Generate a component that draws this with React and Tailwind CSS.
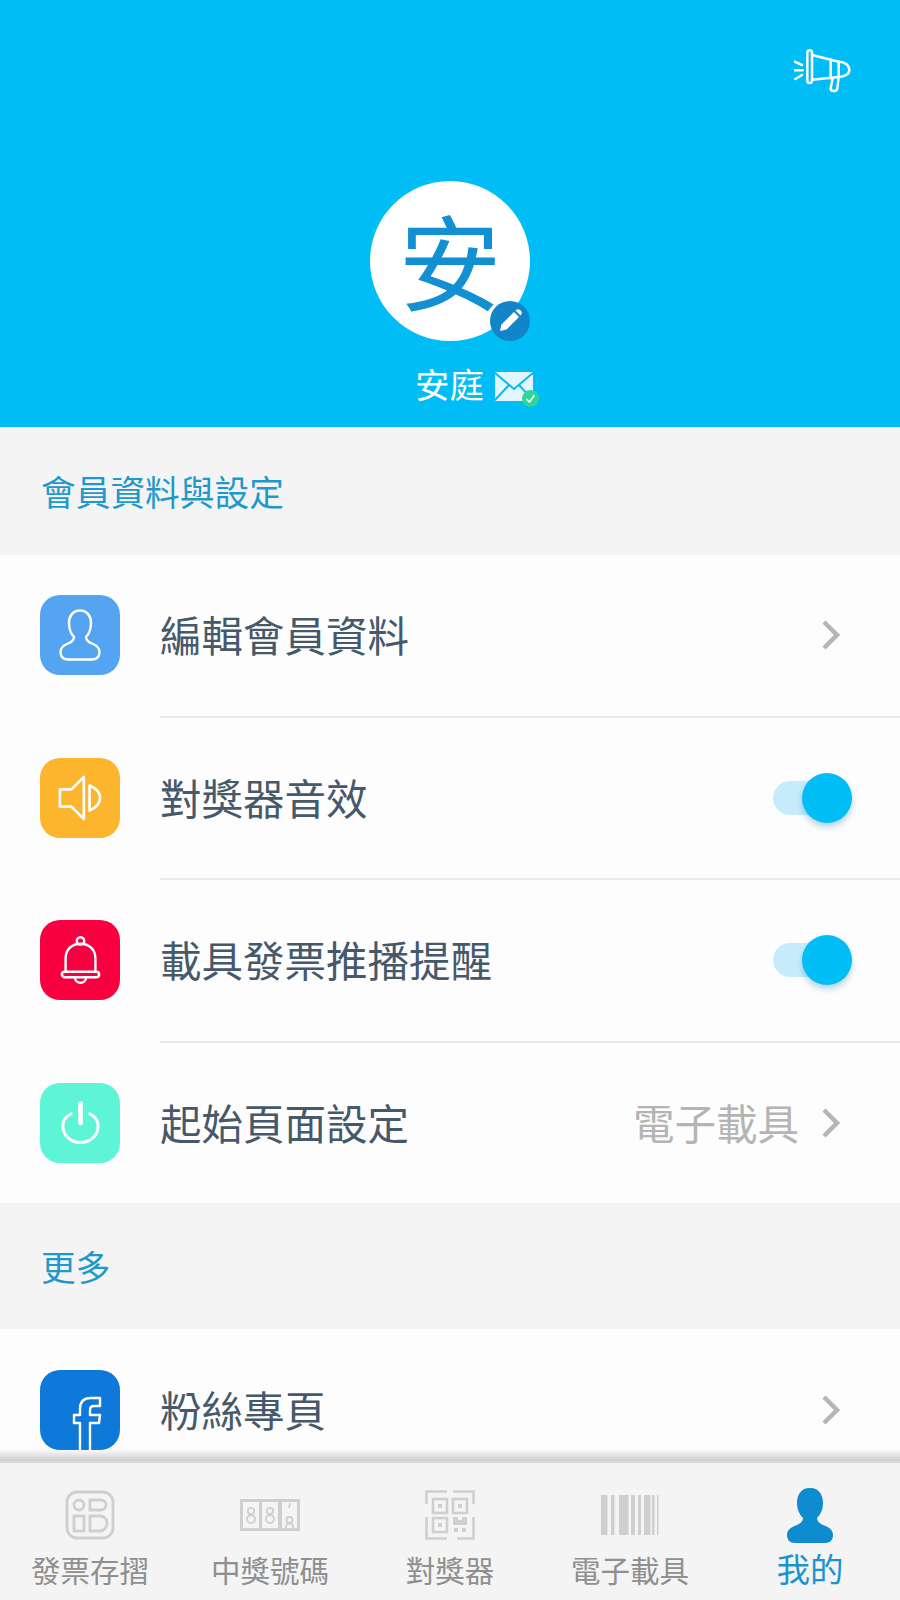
import React from 'react';

const cjk = { fontFamily: '"Noto Sans CJK TC", "Noto Sans", sans-serif' };

const Chevron = () => (
    <svg width="18" height="30" viewBox="0 0 18 30" fill="none" stroke="#b6b6b6" strokeWidth="4.5">
        <path d="M2 2 L15 15 L2 28" />
    </svg>
);

const Toggle = () => (
    <div className="relative w-[79px] h-[50px] flex items-center">
        <div className="w-[62px] h-[34px] rounded-full bg-[#c6ecfb]"></div>
        <div className="absolute right-0 top-0 w-[50px] h-[50px] rounded-full bg-[#00bdf6] shadow-[0_4px_6px_rgba(0,120,170,0.3)]"></div>
    </div>
);

const UserIcon = () => (
    <svg width="42" height="52" viewBox="0 0 42 52" fill="none" stroke="#fff" strokeWidth="2.4">
        <path d="M21 1.5 C14 1.5 10 7 10 14 C10 20 12 25 15 28 C15 31 13 33 9 34.5 C5 36 1.5 38 1.5 43 C1.5 48 5 50.5 10 50.5 L32 50.5 C37 50.5 40.5 48 40.5 43 C40.5 38 37 36 33 34.5 C29 33 27 31 27 28 C30 25 32 20 32 14 C32 7 28 1.5 21 1.5 Z" />
    </svg>
);

const SpeakerIcon = () => (
    <svg width="44" height="46" viewBox="0 0 46 48" fill="none" stroke="#fff" strokeWidth="2.8" strokeLinejoin="round">
        <path d="M2 15 L14 15 L27 2 L27 46 L14 33 L2 33 Z" />
        <path d="M33 11 C40 14 44 19 44 24 C44 29 40 34 33 37 Z" />
    </svg>
);

const BellIcon = () => (
    <svg width="41" height="49" viewBox="0 0 44 52" fill="none" stroke="#fff" strokeWidth="2.6">
        <circle cx="22" cy="5" r="4" />
        <path d="M6 38 L6 24 C6 14 13 8 22 8 C31 8 38 14 38 24 L38 38" />
        <rect x="2" y="38" width="40" height="6" rx="3" />
        <path d="M16 44 C16 48 19 50 22 50 C25 50 28 48 28 44" />
    </svg>
);

const PowerIcon = () => (
    <svg width="39" height="44" viewBox="0 0 42 46" fill="none" stroke="#fff" strokeWidth="3.2" strokeLinecap="round">
        <path d="M11 13 C5 16 2 21 2 26 C2 36 10 44 21 44 C32 44 40 36 40 26 C40 21 37 16 31 13" />
        <path d="M21 2 L21 23" strokeWidth="5" />
    </svg>
);

const FacebookIcon = () => (
    <svg width="30" height="54" viewBox="0 0 30 54" fill="none" stroke="#fff" strokeWidth="2.4" strokeLinejoin="round">
        <path d="M8 54 L8 27 L2 27 L2 19 L8 19 L8 13 C8 5 13 2 19 2 L28 2 L28 10 L22 10 C19 10 18 11 18 14 L18 19 L28 19 L27 27 L18 27 L18 54" />
    </svg>
);

const Row = ({ color, icon, label, children }) => (
    <div className="flex items-center h-[160.6px] pl-10 pr-[48px] bg-[#fdfdfd]">
        <div className={`w-[80px] h-[80px] mr-[40px] rounded-[20px] flex items-center justify-center overflow-hidden ${color}`}>
            {icon}
        </div>
        <div className="flex-1 flex items-center justify-between">
            <span className="text-[41.5px] pb-[2px] text-[#46596a]">{label}</span>
            {children}
        </div>
    </div>
);

const Divider = () => (
    <div className="pl-[160px] bg-[#fdfdfd]">
        <div className="h-[2px] bg-[#e9e9e9]"></div>
    </div>
);

const SectionTitle = ({ children, height }) => (
    <div className={`flex items-center pl-[41px] bg-[#f4f4f4] text-[34.7px] text-[#1f98cb] ${height}`}>
        {children}
    </div>
);

const tabs = [
    {
        label: '發票存摺',
        icon: (
            <svg width="50" height="50" viewBox="0 0 50 50" fill="none" stroke="#cfcfcf" strokeWidth="2.8">
                <rect x="2" y="2" width="46" height="46" rx="10" />
                <circle cx="14" cy="15" r="5" />
                <path d="M25 10 L36 10 C39 10 41 12 41 15 C41 18 39 20 36 20 L25 20 Z" />
                <rect x="9" y="26" width="10" height="15" />
                <path d="M25 26 L35 26 C39 26 42 29 42 33 C42 37 39 41 35 41 L25 41 Z" />
            </svg>
        ),
    },
    {
        label: '中獎號碼',
        icon: (
            <svg width="60" height="32" viewBox="0 0 60 32">
                <rect width="60" height="32" fill="#cfcfcf" />
                <rect x="3" y="3" width="16" height="26" fill="#f4f4f4" />
                <rect x="22" y="3" width="16" height="26" fill="#f4f4f4" />
                <rect x="42" y="3" width="15" height="26" fill="#f4f4f4" />
                <g fill="none" stroke="#cfcfcf" strokeWidth="1.8">
                    <circle cx="11" cy="12" r="3.2" />
                    <circle cx="11" cy="20" r="4" />
                    <circle cx="30" cy="12" r="3.2" />
                    <circle cx="30" cy="20" r="4" />
                    <path d="M50 4 L49 9" />
                    <circle cx="49.5" cy="21" r="3" />
                    <circle cx="49.5" cy="28" r="3.6" />
                </g>
            </svg>
        ),
    },
    {
        label: '對獎器',
        icon: (
            <svg width="50" height="50" viewBox="0 0 50 50" fill="none" stroke="#cfcfcf" strokeWidth="2.6">
                <path d="M1.5 14 L1.5 1.5 L22 1.5 M28 1.5 L48.5 1.5 L48.5 14 M1.5 27 L1.5 48.5 L22 48.5 M48.5 27 L48.5 48.5 L32 48.5" />
                <rect x="8" y="9" width="14" height="14" />
                <rect x="28" y="9" width="14" height="14" />
                <rect x="8" y="28" width="14" height="14" />
                <g fill="#cfcfcf" stroke="none">
                    <rect x="13" y="14" width="4" height="4" />
                    <rect x="33" y="14" width="4" height="4" />
                    <rect x="13" y="33" width="4" height="4" />
                    <path d="M28 27 L33 27 L33 30 L37 30 L37 27 L42 27 L42 35 L28 35 Z" />
                    <rect x="29" y="38" width="4" height="4" />
                    <rect x="37" y="38" width="4" height="4" />
                </g>
            </svg>
        ),
    },
    {
        label: '電子載具',
        icon: (
            <svg width="58" height="40" viewBox="0 0 58 40" fill="#cfcfcf">
                <rect x="0" width="6.5" height="40" />
                <rect x="10" width="3.5" height="40" />
                <rect x="18" width="9.5" height="40" />
                <rect x="30" width="4" height="40" />
                <rect x="37" width="3" height="40" />
                <rect x="43" width="6.5" height="40" />
                <rect x="51" width="2.5" height="40" />
                <rect x="56" width="1.5" height="40" />
            </svg>
        ),
    },
    {
        label: '我的',
        active: true,
        icon: (
            <svg width="46" height="55" viewBox="0 0 46 55" fill="#0f8bd0">
                <path d="M23 0 C13 0 10 8 10 15 C10 22 13 27 16 30 C16 33 14 35 10 37 C5 39 0 41 0 47 C0 52 3 55 8 55 L38 55 C43 55 46 52 46 47 C46 41 41 39 36 37 C32 35 30 33 30 30 C33 27 36 22 36 15 C36 8 33 0 23 0 Z" />
            </svg>
        ),
    },
];

const App = () => {
    return (
        <div className="w-[900px] h-[1600px] flex flex-col overflow-hidden bg-[#fdfdfd]" style={cjk}>
            <div className="flex-1 overflow-hidden">
                <div className="h-[427px] bg-[#00bdf6] flex flex-col items-center">
                    <div className="w-full flex justify-end pt-[49px] pr-[46px]">
                        <svg width="60" height="44" viewBox="0 0 180 132" fill="none" stroke="#fff" strokeWidth="7.5" strokeLinecap="round" strokeLinejoin="round">
                            <path d="M2 38 L24 48 M0 64 L26 64 M4 90 L24 78" />
                            <rect x="40" y="4" width="14" height="98" rx="7" />
                            <path d="M54 18 L134 38 C154 38 166 50 166 62 C166 74 154 84 134 84 L54 92" />
                            <path d="M110 32 L110 88 M134 38 L134 84" />
                            <path d="M116 88 L110 118 C110 128 128 130 130 118 L134 84" />
                        </svg>
                    </div>
                    <div className="relative mt-[88px] w-[160px] h-[160px] rounded-full bg-white flex items-center justify-center">
                        <span className="text-[103px] leading-none pb-[6px] text-[#1390d2]">安</span>
                        <div className="absolute right-0 bottom-0 w-[40px] h-[40px] rounded-full bg-[#1284c8] flex items-center justify-center">
                            <svg width="24" height="24" viewBox="0 0 24 24" fill="#fff">
                                <path d="M2 22 L3.5 15.5 L16 3 L21 8 L8.5 20.5 Z" />
                                <path d="M17.5 1.5 L19 0.5 C20 0 21 0 22 1 L23 2 C24 3 24 4 23.5 5 L22.5 6.5 Z" />
                            </svg>
                        </div>
                    </div>
                    <div className="mt-[20px] flex items-center text-white ml-[48px]">
                        <span className="text-[34.5px] leading-[44px]">安庭</span>
                        <div className="relative ml-[11px] w-[38px] h-[29px] mt-[6px]">
                            <svg width="38" height="29" viewBox="0 0 38 29">
                                <rect width="38" height="29" rx="1.5" fill="#e4f6fd" />
                                <path d="M0 1 L19 17 L38 1 M0 28 L14 13 M38 28 L24 13" fill="none" stroke="#00bdf6" strokeWidth="2" />
                            </svg>
                            <div className="absolute -right-[6px] -bottom-[6px] w-[17px] h-[17px] rounded-full bg-[#2fd69b] flex items-center justify-center">
                                <svg width="11" height="11" viewBox="0 0 11 11" fill="none" stroke="#fff" strokeWidth="1.6">
                                    <path d="M1.5 6 L4.5 9 L9.5 2" />
                                </svg>
                            </div>
                        </div>
                    </div>
                </div>

                <SectionTitle height="h-[128px]">會員資料與設定</SectionTitle>
                <Row color="bg-[#55a4f2]" icon={<UserIcon />} label="編輯會員資料"><div className="mr-[12px]"><Chevron /></div></Row>
                <Divider />
                <Row color="bg-[#fdb52e]" icon={<SpeakerIcon />} label="對獎器音效"><Toggle /></Row>
                <Divider />
                <Row color="bg-[#f8003f]" icon={<BellIcon />} label="載具發票推播提醒"><Toggle /></Row>
                <Divider />
                <Row color="bg-[#5ef5d6]" icon={<PowerIcon />} label="起始頁面設定">
                    <div className="flex items-center gap-[23px] mr-[12px]">
                        <span className="text-[41.5px] pb-[2px] text-[#b4b4b4]">電子載具</span>
                        <Chevron />
                    </div>
                </Row>
                <SectionTitle height="h-[126px]">更多</SectionTitle>
                <Row
                    color="bg-[#0f79da]"
                    icon={<div className="h-full pt-[26px] pl-[14px]"><FacebookIcon /></div>}
                    label="粉絲專頁"
                >
                    <div className="mr-[12px]"><Chevron /></div>
                </Row>
            </div>

            <div className="relative h-[139px] shrink-0 bg-[#f4f4f4] border-t-2 border-[#d9d9d9] grid grid-cols-5">
                <div className="absolute -top-[14px] left-0 right-0 h-[12px] bg-gradient-to-b from-transparent to-[#cdcdcd]"></div>
                {tabs.map((tab) => (
                    <div key={tab.label} className="flex flex-col items-center">
                        <div className="h-[87px] flex items-center justify-center pt-[17px]">{tab.icon}</div>
                        <span className={tab.active ? 'text-[33.5px] leading-[36px] text-[#1a93cf]' : 'text-[29.5px] leading-[36px] mt-[1px] text-[#8f8f8f]'}>
                            {tab.label}
                        </span>
                    </div>
                ))}
            </div>
        </div>
    );
}

export default App;
